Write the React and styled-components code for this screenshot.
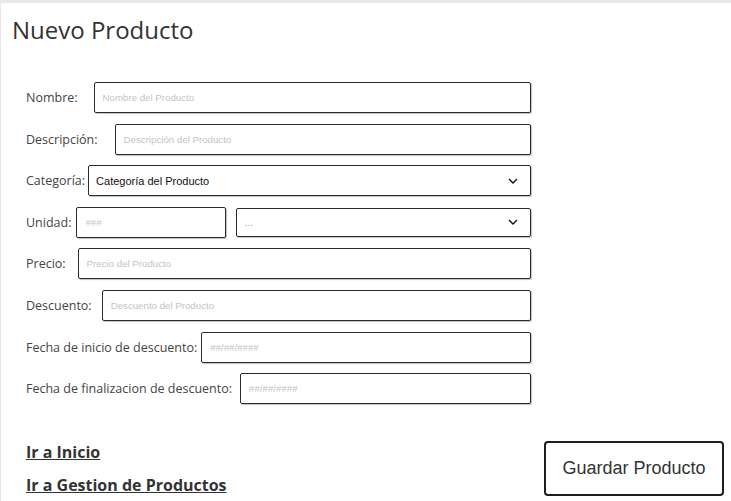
import React from 'react';
import styled, { createGlobalStyle } from 'styled-components';

const GlobalStyle = createGlobalStyle`
  html, body {
    margin: 0;
    padding: 0;
    background: #e8e8e8;
  }
  * {
    box-sizing: border-box;
  }
`;

const Page = styled.div`
  margin: 3px 0 0 1px;
  min-height: 498px;
  background: #ffffff;
  font-family: "Open Sans", "DejaVu Sans", sans-serif;
  color: #3a3a3a;
`;

const Title = styled.h1`
  margin: 0;
  padding: 11px 0 0 11px;
  font-size: 24px;
  line-height: 32px;
  font-weight: 400;
  color: #333333;
`;

const Form = styled.form`
  display: flex;
  flex-direction: column;
  gap: 10.6px;
  width: 530px;
  padding: 36px 0 0 25px;
`;

const Row = styled.div`
  display: flex;
  align-items: center;
  gap: ${({ gap }) => gap}px;
  height: 31px;
`;

const Label = styled.label`
  font-size: 12.5px;
  color: #444444;
  white-space: nowrap;
`;

const Input = styled.input`
  flex: ${({ width }) => (width ? `0 0 ${width}px` : '1')};
  height: 31px;
  padding: 0 8px;
  border: 1px solid #2b2b2b;
  border-radius: 2px;
  box-shadow: 1px 1px 1px rgba(0, 0, 0, 0.25);
  font-family: "Liberation Sans", Arial, sans-serif;
  font-size: 9.7px;
  outline: none;

  &::placeholder {
    color: #c4c4c4;
  }
`;

const SelectBox = styled.div`
  flex: 1;
  display: flex;
  align-items: center;
  justify-content: space-between;
  height: ${({ short }) => (short ? 29 : 31)}px;
  margin-left: ${({ offset }) => offset || 0}px;
  padding: 0 12px 0 7px;
  border: 1px solid #2b2b2b;
  border-radius: 2px;
  box-shadow: 1px 1px 1px rgba(0, 0, 0, 0.25);
  font-family: "Liberation Sans", Arial, sans-serif;
  font-size: 11px;
  color: ${({ muted }) => (muted ? '#b0b0b0' : '#111111')};
`;

const Bottom = styled.div`
  display: flex;
  justify-content: space-between;
  align-items: flex-start;
  padding: 37px 7px 0 25px;
`;

const Links = styled.div`
  display: flex;
  flex-direction: column;
  gap: 11px;
`;

const NavLink = styled.a`
  font-size: 16px;
  font-weight: 700;
  color: #333333;
  text-decoration: underline;
  line-height: 22px;
  cursor: pointer;
`;

const SaveButton = styled.button`
  width: 180px;
  height: 55px;
  background: #ffffff;
  border: 2px solid #1e1e1e;
  border-radius: 4px;
  font-family: "Liberation Sans", Arial, sans-serif;
  font-size: 18px;
  color: #333333;
  cursor: pointer;
`;

function Chevron() {
  return (
    <svg width="10" height="6" viewBox="0 0 10 6" fill="none">
      <path d="M1 1l4 4 4-4" stroke="#111" strokeWidth="1.4" />
    </svg>
  );
}

export default function App() {
  return (
    <Page>
      <GlobalStyle />
      <Title>Nuevo Producto</Title>
      <Form onSubmit={(e) => e.preventDefault()}>
        <Row gap={16}>
          <Label>Nombre:</Label>
          <Input placeholder="Nombre del Producto" />
        </Row>
        <Row gap={17}>
          <Label>Descripción:</Label>
          <Input placeholder="Descripción del Producto" />
        </Row>
        <Row gap={3}>
          <Label>Categoría:</Label>
          <SelectBox>
            <span>Categoría del Producto</span>
            <Chevron />
          </SelectBox>
        </Row>
        <Row gap={5}>
          <Label>Unidad:</Label>
          <Input width={150} placeholder="###" />
          <SelectBox short muted offset={5}>
            <span>...</span>
            <Chevron />
          </SelectBox>
        </Row>
        <Row gap={12}>
          <Label>Precio:</Label>
          <Input placeholder="Precio del Producto" />
        </Row>
        <Row gap={10}>
          <Label>Descuento:</Label>
          <Input placeholder="Descuento del Producto" />
        </Row>
        <Row gap={4}>
          <Label>Fecha de inicio de descuento:</Label>
          <Input placeholder="##/##/####" />
        </Row>
        <Row gap={8}>
          <Label>Fecha de finalizacion de descuento:</Label>
          <Input placeholder="##/##/####" />
        </Row>
      </Form>
      <Bottom>
        <Links>
          <NavLink>Ir a Inicio</NavLink>
          <NavLink>Ir a Gestion de Productos</NavLink>
        </Links>
        <SaveButton type="button">Guardar Producto</SaveButton>
      </Bottom>
    </Page>
  );
}
